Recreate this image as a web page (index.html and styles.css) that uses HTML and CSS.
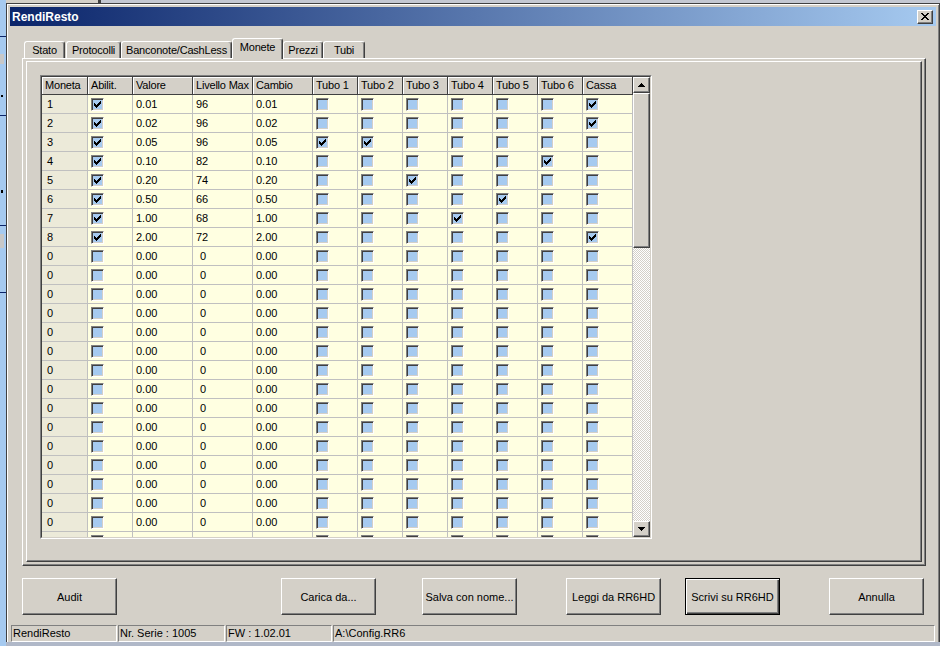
FILE: index.html
```html
<!DOCTYPE html>
<html>
<head>
<meta charset="utf-8">
<title>RendiResto</title>
<link rel="stylesheet" href="styles.css">
</head>
<body>
<div class="desk-left"></div>
<div class="desk-main">
  <div class="desk-top"></div>
  <div class="window">
    <div class="titlebar">
      <span class="title">RendiResto</span>
      <span class="closebtn"><svg width="8" height="7" viewBox="0 0 8 7" shape-rendering="crispEdges"><path d="M0 0h2v1H0z M6 0h2v1H6z M1 1h2v1H1z M5 1h2v1H5z M2 2h4v1H2z M3 3h2v1H3z M2 4h4v1H2z M1 5h2v1H1z M5 5h2v1H5z M0 6h2v1H0z M6 6h2v1H6z" fill="#000"/></svg></span>
    </div>
    <div class="client">
      <div class="tabs">
        <div class="tab t-stato">Stato</div>
        <div class="tab t-proto">Protocolli</div>
        <div class="tab t-banc">Banconote/CashLess</div>
        <div class="tab t-mon sel">Monete</div>
        <div class="tab t-prez">Prezzi</div>
        <div class="tab t-tubi">Tubi</div>
      </div>
      <div class="panel">
        <div class="frame">
          <div class="grid">
            <div class="grid-in">
              <div class="tbl">
                <div class="c h">Moneta</div><div class="c h">Abilit.</div><div class="c h">Valore</div><div class="c h">Livello Max</div><div class="c h">Cambio</div><div class="c h">Tubo 1</div><div class="c h">Tubo 2</div><div class="c h">Tubo 3</div><div class="c h">Tubo 4</div><div class="c h">Tubo 5</div><div class="c h">Tubo 6</div><div class="c h">Cassa</div>

                <div class="c m">1</div><div class="c k"><i class="cb on"></i></div><div class="c">0.01</div><div class="c">96</div><div class="c">0.01</div><div class="c k"><i class="cb"></i></div><div class="c k"><i class="cb"></i></div><div class="c k"><i class="cb"></i></div><div class="c k"><i class="cb"></i></div><div class="c k"><i class="cb"></i></div><div class="c k"><i class="cb"></i></div><div class="c k"><i class="cb on"></i></div>

                <div class="c m">2</div><div class="c k"><i class="cb on"></i></div><div class="c">0.02</div><div class="c">96</div><div class="c">0.02</div><div class="c k"><i class="cb"></i></div><div class="c k"><i class="cb"></i></div><div class="c k"><i class="cb"></i></div><div class="c k"><i class="cb"></i></div><div class="c k"><i class="cb"></i></div><div class="c k"><i class="cb"></i></div><div class="c k"><i class="cb on"></i></div>

                <div class="c m">3</div><div class="c k"><i class="cb on"></i></div><div class="c">0.05</div><div class="c">96</div><div class="c">0.05</div><div class="c k"><i class="cb on"></i></div><div class="c k"><i class="cb on"></i></div><div class="c k"><i class="cb"></i></div><div class="c k"><i class="cb"></i></div><div class="c k"><i class="cb"></i></div><div class="c k"><i class="cb"></i></div><div class="c k"><i class="cb"></i></div>

                <div class="c m">4</div><div class="c k"><i class="cb on"></i></div><div class="c">0.10</div><div class="c">82</div><div class="c">0.10</div><div class="c k"><i class="cb"></i></div><div class="c k"><i class="cb"></i></div><div class="c k"><i class="cb"></i></div><div class="c k"><i class="cb"></i></div><div class="c k"><i class="cb"></i></div><div class="c k"><i class="cb on"></i></div><div class="c k"><i class="cb"></i></div>

                <div class="c m">5</div><div class="c k"><i class="cb on"></i></div><div class="c">0.20</div><div class="c">74</div><div class="c">0.20</div><div class="c k"><i class="cb"></i></div><div class="c k"><i class="cb"></i></div><div class="c k"><i class="cb on"></i></div><div class="c k"><i class="cb"></i></div><div class="c k"><i class="cb"></i></div><div class="c k"><i class="cb"></i></div><div class="c k"><i class="cb"></i></div>

                <div class="c m">6</div><div class="c k"><i class="cb on"></i></div><div class="c">0.50</div><div class="c">66</div><div class="c">0.50</div><div class="c k"><i class="cb"></i></div><div class="c k"><i class="cb"></i></div><div class="c k"><i class="cb"></i></div><div class="c k"><i class="cb"></i></div><div class="c k"><i class="cb on"></i></div><div class="c k"><i class="cb"></i></div><div class="c k"><i class="cb"></i></div>

                <div class="c m">7</div><div class="c k"><i class="cb on"></i></div><div class="c">1.00</div><div class="c">68</div><div class="c">1.00</div><div class="c k"><i class="cb"></i></div><div class="c k"><i class="cb"></i></div><div class="c k"><i class="cb"></i></div><div class="c k"><i class="cb on"></i></div><div class="c k"><i class="cb"></i></div><div class="c k"><i class="cb"></i></div><div class="c k"><i class="cb"></i></div>

                <div class="c m">8</div><div class="c k"><i class="cb on"></i></div><div class="c">2.00</div><div class="c">72</div><div class="c">2.00</div><div class="c k"><i class="cb"></i></div><div class="c k"><i class="cb"></i></div><div class="c k"><i class="cb"></i></div><div class="c k"><i class="cb"></i></div><div class="c k"><i class="cb"></i></div><div class="c k"><i class="cb"></i></div><div class="c k"><i class="cb on"></i></div>

                <div class="c m">0</div><div class="c k"><i class="cb"></i></div><div class="c">0.00</div><div class="c z">0</div><div class="c">0.00</div><div class="c k"><i class="cb"></i></div><div class="c k"><i class="cb"></i></div><div class="c k"><i class="cb"></i></div><div class="c k"><i class="cb"></i></div><div class="c k"><i class="cb"></i></div><div class="c k"><i class="cb"></i></div><div class="c k"><i class="cb"></i></div>
                <div class="c m">0</div><div class="c k"><i class="cb"></i></div><div class="c">0.00</div><div class="c z">0</div><div class="c">0.00</div><div class="c k"><i class="cb"></i></div><div class="c k"><i class="cb"></i></div><div class="c k"><i class="cb"></i></div><div class="c k"><i class="cb"></i></div><div class="c k"><i class="cb"></i></div><div class="c k"><i class="cb"></i></div><div class="c k"><i class="cb"></i></div>
                <div class="c m">0</div><div class="c k"><i class="cb"></i></div><div class="c">0.00</div><div class="c z">0</div><div class="c">0.00</div><div class="c k"><i class="cb"></i></div><div class="c k"><i class="cb"></i></div><div class="c k"><i class="cb"></i></div><div class="c k"><i class="cb"></i></div><div class="c k"><i class="cb"></i></div><div class="c k"><i class="cb"></i></div><div class="c k"><i class="cb"></i></div>
                <div class="c m">0</div><div class="c k"><i class="cb"></i></div><div class="c">0.00</div><div class="c z">0</div><div class="c">0.00</div><div class="c k"><i class="cb"></i></div><div class="c k"><i class="cb"></i></div><div class="c k"><i class="cb"></i></div><div class="c k"><i class="cb"></i></div><div class="c k"><i class="cb"></i></div><div class="c k"><i class="cb"></i></div><div class="c k"><i class="cb"></i></div>
                <div class="c m">0</div><div class="c k"><i class="cb"></i></div><div class="c">0.00</div><div class="c z">0</div><div class="c">0.00</div><div class="c k"><i class="cb"></i></div><div class="c k"><i class="cb"></i></div><div class="c k"><i class="cb"></i></div><div class="c k"><i class="cb"></i></div><div class="c k"><i class="cb"></i></div><div class="c k"><i class="cb"></i></div><div class="c k"><i class="cb"></i></div>
                <div class="c m">0</div><div class="c k"><i class="cb"></i></div><div class="c">0.00</div><div class="c z">0</div><div class="c">0.00</div><div class="c k"><i class="cb"></i></div><div class="c k"><i class="cb"></i></div><div class="c k"><i class="cb"></i></div><div class="c k"><i class="cb"></i></div><div class="c k"><i class="cb"></i></div><div class="c k"><i class="cb"></i></div><div class="c k"><i class="cb"></i></div>
                <div class="c m">0</div><div class="c k"><i class="cb"></i></div><div class="c">0.00</div><div class="c z">0</div><div class="c">0.00</div><div class="c k"><i class="cb"></i></div><div class="c k"><i class="cb"></i></div><div class="c k"><i class="cb"></i></div><div class="c k"><i class="cb"></i></div><div class="c k"><i class="cb"></i></div><div class="c k"><i class="cb"></i></div><div class="c k"><i class="cb"></i></div>
                <div class="c m">0</div><div class="c k"><i class="cb"></i></div><div class="c">0.00</div><div class="c z">0</div><div class="c">0.00</div><div class="c k"><i class="cb"></i></div><div class="c k"><i class="cb"></i></div><div class="c k"><i class="cb"></i></div><div class="c k"><i class="cb"></i></div><div class="c k"><i class="cb"></i></div><div class="c k"><i class="cb"></i></div><div class="c k"><i class="cb"></i></div>
                <div class="c m">0</div><div class="c k"><i class="cb"></i></div><div class="c">0.00</div><div class="c z">0</div><div class="c">0.00</div><div class="c k"><i class="cb"></i></div><div class="c k"><i class="cb"></i></div><div class="c k"><i class="cb"></i></div><div class="c k"><i class="cb"></i></div><div class="c k"><i class="cb"></i></div><div class="c k"><i class="cb"></i></div><div class="c k"><i class="cb"></i></div>
                <div class="c m">0</div><div class="c k"><i class="cb"></i></div><div class="c">0.00</div><div class="c z">0</div><div class="c">0.00</div><div class="c k"><i class="cb"></i></div><div class="c k"><i class="cb"></i></div><div class="c k"><i class="cb"></i></div><div class="c k"><i class="cb"></i></div><div class="c k"><i class="cb"></i></div><div class="c k"><i class="cb"></i></div><div class="c k"><i class="cb"></i></div>
                <div class="c m">0</div><div class="c k"><i class="cb"></i></div><div class="c">0.00</div><div class="c z">0</div><div class="c">0.00</div><div class="c k"><i class="cb"></i></div><div class="c k"><i class="cb"></i></div><div class="c k"><i class="cb"></i></div><div class="c k"><i class="cb"></i></div><div class="c k"><i class="cb"></i></div><div class="c k"><i class="cb"></i></div><div class="c k"><i class="cb"></i></div>
                <div class="c m">0</div><div class="c k"><i class="cb"></i></div><div class="c">0.00</div><div class="c z">0</div><div class="c">0.00</div><div class="c k"><i class="cb"></i></div><div class="c k"><i class="cb"></i></div><div class="c k"><i class="cb"></i></div><div class="c k"><i class="cb"></i></div><div class="c k"><i class="cb"></i></div><div class="c k"><i class="cb"></i></div><div class="c k"><i class="cb"></i></div>
                <div class="c m">0</div><div class="c k"><i class="cb"></i></div><div class="c">0.00</div><div class="c z">0</div><div class="c">0.00</div><div class="c k"><i class="cb"></i></div><div class="c k"><i class="cb"></i></div><div class="c k"><i class="cb"></i></div><div class="c k"><i class="cb"></i></div><div class="c k"><i class="cb"></i></div><div class="c k"><i class="cb"></i></div><div class="c k"><i class="cb"></i></div>
                <div class="c m">0</div><div class="c k"><i class="cb"></i></div><div class="c">0.00</div><div class="c z">0</div><div class="c">0.00</div><div class="c k"><i class="cb"></i></div><div class="c k"><i class="cb"></i></div><div class="c k"><i class="cb"></i></div><div class="c k"><i class="cb"></i></div><div class="c k"><i class="cb"></i></div><div class="c k"><i class="cb"></i></div><div class="c k"><i class="cb"></i></div>
                <div class="c m">0</div><div class="c k"><i class="cb"></i></div><div class="c">0.00</div><div class="c z">0</div><div class="c">0.00</div><div class="c k"><i class="cb"></i></div><div class="c k"><i class="cb"></i></div><div class="c k"><i class="cb"></i></div><div class="c k"><i class="cb"></i></div><div class="c k"><i class="cb"></i></div><div class="c k"><i class="cb"></i></div><div class="c k"><i class="cb"></i></div>
                <div class="c m"></div><div class="c k"><i class="cb"></i></div><div class="c"></div><div class="c"></div><div class="c"></div><div class="c k"><i class="cb"></i></div><div class="c k"><i class="cb"></i></div><div class="c k"><i class="cb"></i></div><div class="c k"><i class="cb"></i></div><div class="c k"><i class="cb"></i></div><div class="c k"><i class="cb"></i></div><div class="c k"><i class="cb"></i></div>
              </div>
              <div class="vscroll">
                <div class="sbtn"><svg width="7" height="4" viewBox="0 0 7 4" shape-rendering="crispEdges"><path d="M3 0h1v1H3z M2 1h3v1H2z M1 2h5v1H1z M0 3h7v1H0z" fill="#000"/></svg></div>
                <div class="thumb"></div>
                <div class="track"></div>
                <div class="sbtn"><svg width="7" height="4" viewBox="0 0 7 4" shape-rendering="crispEdges"><path d="M0 0h7v1H0z M1 1h5v1H1z M2 2h3v1H2z M3 3h1v1H3z" fill="#000"/></svg></div>
              </div>
            </div>
          </div>
        </div>
      </div>
      <div class="buttons">
        <div class="btn">Audit</div>
        <div class="btn b-carica">Carica da...</div>
        <div class="btn b-salva">Salva con nome...</div>
        <div class="btn b-leggi">Leggi da RR6HD</div>
        <div class="btn b-scrivi def">Scrivi su RR6HD</div>
        <div class="btn b-annulla">Annulla</div>
      </div>
      <div class="statusbar">
        <div class="sp s1">RendiResto</div>
        <div class="sp s2">Nr. Serie : 1005</div>
        <div class="sp s3">FW : 1.02.01</div>
        <div class="sp s4">A:\Config.RR6</div>
      </div>
    </div>
  </div>
</div>
</body>
</html>
```

FILE: styles.css
```css
* { box-sizing: border-box; }
html, body { margin: 0; padding: 0; }
body {
  width: 940px;
  height: 646px;
  overflow: hidden;
  display: flex;
  font-family: "Liberation Sans", Arial, sans-serif;
  font-size: 11px;
  color: #000;
  background: #b0b8c8;
}

/* desktop around the window */
.desk-left {
  width: 6px;
  flex: none;
  background:
    linear-gradient(#0a246a, #0a246a) 0 36px / 6px 1px no-repeat,
    linear-gradient(#c8c8c8, #c8c8c8) 0 54px / 4px 10px no-repeat,
    linear-gradient(#000, #000) 1px 95px / 2px 2px no-repeat,
    linear-gradient(#0a246a, #0a246a) 0 115px / 6px 1px no-repeat,
    linear-gradient(#000, #000) 1px 190px / 2px 3px no-repeat,
    linear-gradient(#0a246a, #0a246a) 0 225px / 6px 1px no-repeat,
    linear-gradient(#c8c8c8, #c8c8c8) 0 234px / 4px 14px no-repeat,
    linear-gradient(#0a246a, #0a246a) 0 292px / 6px 1px no-repeat,
    #a6caf0;
}
.desk-main {
  flex: 1;
  display: flex;
  flex-direction: column;
}
.desk-top {
  height: 3px;
  flex: none;
  background: linear-gradient(to right, #d4d0c8 0, #d4d0c8 92px, #404040 92px, #404040 95px, #c4c8d2 95px);
}

/* window */
.window {
  flex: none;
  display: flex;
  flex-direction: column;
  background: #d4d0c8;
  border: 1px solid #404040;
  border-bottom: 0;
  padding: 3px 3px 0 3px;
  box-shadow: inset 1px 1px 0 #fff, inset -1px 0 0 #808080;
}
.titlebar {
  height: 19px;
  display: flex;
  align-items: center;
  padding-left: 2px;
  background: linear-gradient(to right, #0a246a, #a6caf0);
}
.title {
  color: #fff;
  font-weight: bold;
  font-size: 12px;
}
.closebtn {
  margin-left: auto;
  margin-right: 3px;
  width: 16px;
  height: 14px;
  display: flex;
  align-items: center;
  justify-content: center;
  background: #d4d0c8;
  border: 1px solid;
  border-color: #fff #404040 #404040 #fff;
  box-shadow: inset -1px -1px 0 #808080;
}

.client {
  display: flex;
  flex-direction: column;
}

/* tabs */
.tabs {
  margin: 12px 0 0 14px;
  height: 20px;
  display: flex;
  align-items: flex-end;
}
.tab {
  height: 17px;
  border: 1px solid;
  border-color: #fff #404040 transparent #fff;
  border-bottom: 0;
  border-radius: 3px 3px 0 0;
  box-shadow: inset -1px 0 0 #808080;
  background: #d4d0c8;
  text-align: center;
  line-height: 16px;
  white-space: nowrap;
  letter-spacing: -0.2px;
}
.t-stato { width: 41px; margin-right: 1px; }
.t-proto { width: 55px; }
.t-banc { width: 111px; }
.t-mon { width: 51px; }
.t-prez { width: 40px; }
.t-tubi { width: 42px; }
.tab.sel {
  height: 21px;
  margin-bottom: -1px;
  position: relative;
  z-index: 1;
  line-height: 17px;
}

/* tab page */
.panel {
  margin-left: 12px;
  width: 904px;
  height: 508px;
  border: 1px solid;
  border-color: #fff #404040 #404040 #fff;
  box-shadow: inset -1px -1px 0 #808080;
  padding: 2px 3px 3px 3px;
}
.frame {
  width: 896px;
  height: 501px;
  border: 1px solid;
  border-color: #fff #404040 #404040 #fff;
  box-shadow: inset -1px -1px 0 #808080;
  padding: 13px;
}

/* grid */
.grid {
  width: 612px;
  height: 464px;
  border: 1px solid;
  border-color: #808080 #fff #fff #808080;
}
.grid-in {
  height: 462px;
  display: flex;
  border: 1px solid;
  border-color: #404040 #d4d0c8 #d4d0c8 #404040;
}
.tbl {
  width: 591px;
  height: 460px;
  overflow: hidden;
  display: grid;
  grid-template-columns: 46px 45px 60px 60px 60px repeat(6, 45px) 50px;
  grid-template-rows: 18px;
  grid-auto-rows: 19px;
  align-content: start;
  background: #fff;
}
.c {
  background: #ffffe1;
  border-right: 1px solid #c0c0c0;
  border-bottom: 1px solid #c0c0c0;
  padding: 0 3px;
  line-height: 18px;
  white-space: nowrap;
  overflow: hidden;
}
.c.h {
  background: #d4d0c8;
  border-right-color: #404040;
  border-bottom-color: #404040;
  box-shadow: inset 1px 1px 0 #fff;
  line-height: 17px;
  letter-spacing: -0.2px;
}
.c.m { background: #ecead9; padding-left: 5px; }
.c.z { padding-left: 7px; }
.c.k { padding: 3px 0 0 3px; }

.cb {
  display: block;
  position: relative;
  width: 13px;
  height: 13px;
  border: 1px solid;
  border-color: #808080 #fff #fff #808080;
  box-shadow: inset 1px 1px 0 #404040, inset -1px -1px 0 #d4d0c8;
  background: #a6caf0;
}
.cb.on::after {
  content: "";
  position: absolute;
  left: 2px;
  top: 2px;
  width: 1px;
  height: 1px;
  box-shadow:
    6px 0 0 #000,
    5px 1px 0 #000, 6px 1px 0 #000,
    0 2px 0 #000, 4px 2px 0 #000, 5px 2px 0 #000, 6px 2px 0 #000,
    0 3px 0 #000, 1px 3px 0 #000, 3px 3px 0 #000, 4px 3px 0 #000, 5px 3px 0 #000,
    0 4px 0 #000, 1px 4px 0 #000, 2px 4px 0 #000, 3px 4px 0 #000, 4px 4px 0 #000,
    1px 5px 0 #000, 2px 5px 0 #000, 3px 5px 0 #000,
    2px 6px 0 #000;
}

/* scrollbar */
.vscroll {
  width: 17px;
  height: 460px;
  display: flex;
  flex-direction: column;
}
.sbtn {
  height: 16px;
  flex: none;
  display: flex;
  align-items: center;
  justify-content: center;
  background: #d4d0c8;
  border: 1px solid;
  border-color: #fff #404040 #404040 #fff;
  box-shadow: inset -1px -1px 0 #808080;
}
.thumb {
  height: 155px;
  flex: none;
  background: #d4d0c8;
  border: 1px solid;
  border-color: #fff #404040 #404040 #fff;
  box-shadow: inset -1px -1px 0 #808080;
}
.track {
  flex: 1;
  background: repeating-conic-gradient(#d4d0c8 0 25%, #fff 0 50%) 0 0 / 2px 2px;
}

/* buttons */
.buttons {
  margin: 12px 0 0 12px;
  height: 37px;
  display: flex;
}
.btn {
  width: 95px;
  height: 37px;
  flex: none;
  display: flex;
  align-items: center;
  justify-content: center;
  background: #d4d0c8;
  border: 1px solid;
  border-color: #fff #404040 #404040 #fff;
  box-shadow: inset -1px -1px 0 #808080;
  white-space: nowrap;
}
.btn.def {
  border-color: #000;
  box-shadow: inset 1px 1px 0 #fff, inset -1px -1px 0 #404040, inset -2px -2px 0 #808080;
}
.b-carica { margin-left: 164px; }
.b-salva { margin-left: 46px; }
.b-leggi { margin-left: 49px; }
.b-scrivi { margin-left: 24px; }
.b-annulla { margin-left: 49px; }

/* status bar */
.statusbar {
  margin: 10px 1px 0 1px;
  height: 17px;
  display: flex;
  gap: 1px;
}
.sp {
  height: 17px;
  border: 1px solid;
  border-color: #808080 #fff #fff #808080;
  padding-left: 1px;
  line-height: 15px;
  white-space: nowrap;
}
.s1 { width: 106px; }
.s2 { width: 107px; }
.s3 { width: 106px; }
.s4 { flex: 1; }
```
